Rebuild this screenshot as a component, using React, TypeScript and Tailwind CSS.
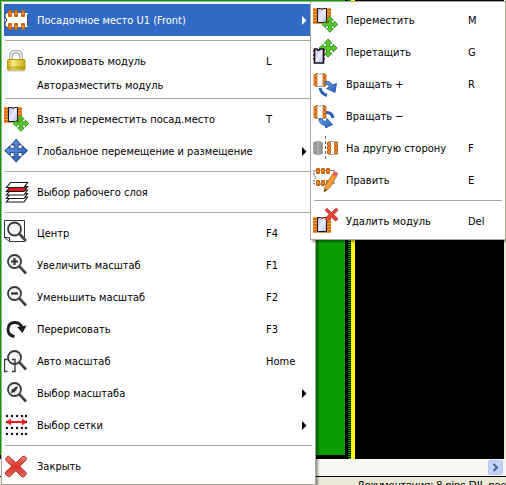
import React from "react";

type IconProps = { children: React.ReactNode };

function Icon({ children }: IconProps) {
  return (
    <svg width="26" height="26" viewBox="0 0 26 26" fill="none" aria-hidden="true" className="shrink-0">
      {children}
    </svg>
  );
}

function Defs() {
  return (
    <svg width="0" height="0" className="block h-0 w-0" aria-hidden="true">
      <defs>
        <linearGradient id="chip" x1="0" y1="0" x2="1" y2="1">
          <stop offset="0" stopColor="#b3b0f0" />
          <stop offset="0.5" stopColor="#ebebfd" />
          <stop offset="1" stopColor="#b9b6f0" />
        </linearGradient>
        <linearGradient id="gold" x1="0" y1="0" x2="1" y2="0">
          <stop offset="0" stopColor="#c9a800" />
          <stop offset="0.3" stopColor="#f6ec8a" />
          <stop offset="1" stopColor="#c6a60a" />
        </linearGradient>
        <linearGradient id="red" x1="0" y1="0" x2="0" y2="1">
          <stop offset="0" stopColor="#f08078" />
          <stop offset="0.5" stopColor="#d8362c" />
          <stop offset="1" stopColor="#e4685c" />
        </linearGradient>
        <linearGradient id="blue" x1="0" y1="0" x2="1" y2="1">
          <stop offset="0" stopColor="#6fa4ea" />
          <stop offset="1" stopColor="#2458b8" />
        </linearGradient>
      </defs>
    </svg>
  );
}

const ARROWS =
  "M12 0L17 5.5H14V10H18.5V7L24 12L18.5 17V14H14V18.5H17L12 24L7 18.5H10V14H5.5V17L0 12L5.5 7V10H10V5.5H7Z";

const CROSS =
  "M4 1L11 7.5L18 1Q20 0 21 1.5L22 3Q22 4 21 5L15 11L21.5 17.5Q22 19 21 20L19 22Q17.500 22 16.500 21L11 15.500L5 21.500Q3.500 22 2.500 21L0.500 19Q0 17.500 1 16.500L7 11L1 5Q0 4 1 3L2.500 1Q3 0 4 1Z";

function Chip() {
  return (
    <>
      <rect x="0" y="1" width="18" height="16" fill="#ee9a4c" />
      {[2, 5, 8, 11, 14].map((y) => (
        <path key={y} d={`M0 ${y}H5V${y + 2}H0ZM13 ${y}H18V${y + 2}H13Z`} fill="#d9710f" />
      ))}
      <path d="M4.500 1.500H7.500Q9 3.500 10.500 1.500H13.500V15.500H4.500Z" fill="url(#chip)" stroke="#17151c" />
    </>
  );
}

function Pad({ x, y, w = 4, h = 7 }: { x: number; y: number; w?: number; h?: number }) {
  return (
    <g>
      <rect x={x} y={y} width={w} height={h} rx="1" fill="#c8640c" />
      <rect x={x + w / 2 - 1} y={y + h / 2 - 1} width="2" height="2" fill="#ee9238" />
    </g>
  );
}

function FootprintIcon() {
  return (
    <Icon>
      <rect x="1" y="6" width="23" height="14" fill="#fff" />
      <path d="M1 10V6H3M1 16V20H3M1 10L3 13L1 16" stroke="#222" />
      <path d="M23.500 7V19.500" stroke="#555" />
      {[4, 10, 17].map((x) => (
        <g key={x}>
          <Pad x={x} y={3} />
          <Pad x={x} y={16} />
        </g>
      ))}
    </Icon>
  );
}

function LockIcon() {
  return (
    <Icon>
      <path d="M7 13V8Q7 3.500 12 3.500T17 8V13" stroke="#8e8e8e" strokeWidth="3.400" />
      <path d="M7 13V8Q7 3.500 12 3.500T17 8V13" stroke="#ececec" strokeWidth="1.800" />
      <rect x="3.500" y="11.500" width="17.500" height="10.500" rx="1" fill="url(#gold)" stroke="#b39a12" />
      <path d="M4 19.500H21" stroke="#b38f00" strokeWidth="2" opacity="0.6" />
      <path d="M4 23H21" stroke="#aaa" opacity="0.6" />
    </Icon>
  );
}

function GrabIcon() {
  return (
    <Icon>
      <Chip />
      <g transform="translate(9 9.500) scale(0.660)">
        <path d={ARROWS} fill="#5ecb2d" stroke="#2f941b" strokeWidth="1.500" />
      </g>
    </Icon>
  );
}

function MoveAllIcon() {
  return (
    <Icon>
      <g transform="translate(1 1.500) scale(0.930)">
        <path d={ARROWS} fill="url(#blue)" stroke="#244885" strokeWidth="1.100" />
      </g>
    </Icon>
  );
}

function LayersIcon() {
  return (
    <Icon>
      {[18, 14.5, 11, 7.5, 3.5].map((y) => (
        <path
          key={y}
          d={`M6.500 ${y}H23.500L20 ${y + 5}H2.500Z`}
          fill={y === 7.5 ? "#e01820" : "#fff"}
          stroke="#191919"
          strokeWidth="1.200"
        />
      ))}
    </Icon>
  );
}

function Lens({ y = 9.5 }: { y?: number }) {
  return (
    <>
      <path d={`M15.500 ${y + 5}L22 ${y + 12}`} stroke="#444" strokeWidth="2.600" />
      <circle cx="10.500" cy={y} r="6.500" fill="#f4f4f4" stroke="#383838" strokeWidth="1.800" />
    </>
  );
}

function CenterIcon() {
  return (
    <Icon>
      <path d="M0.500 0.500H20.500V21.500H5.500L0.500 17.500Z" fill="#fff" stroke="#333" />
      <path d="M0.500 17.500H5.500V21.500" stroke="#333" />
      <Lens y={9} />
    </Icon>
  );
}

function ZoomInIcon() {
  return (
    <Icon>
      <Lens />
      <path d="M7 9.500H14M10.500 6V13" stroke="#333" strokeWidth="2.200" />
    </Icon>
  );
}

function ZoomOutIcon() {
  return (
    <Icon>
      <Lens />
      <path d="M7 9.500H14" stroke="#333" strokeWidth="2.200" />
    </Icon>
  );
}

function RedrawIcon() {
  return (
    <Icon>
      <path d="M10.500 20.500Q3.500 19.500 4 13Q4.500 6.500 11 6.500Q16.500 6.500 18 12" stroke="#1d1d1d" strokeWidth="2.800" />
      <path d="M13 11L22.500 9.500L18.500 17Z" fill="#1d1d1d" />
    </Icon>
  );
}

function AutoZoomIcon() {
  return (
    <Icon>
      <Lens />
      <path d="M3.500 11.500H0.500V23.500H3.500M8 11.500H11V23.500H8" stroke="#333" strokeWidth="1.300" />
    </Icon>
  );
}

function ZoomSelectIcon() {
  return (
    <Icon>
      <Lens />
      <path d="M7 13L8 8.500L9 9.500L10.500 7.500L14 6L12.500 10L10.500 11.500L11.500 12Z" fill="#333" />
    </Icon>
  );
}

function GridIcon() {
  return (
    <Icon>
      {[4, 10, 16, 22].map((y) =>
        [3, 8, 13, 18, 22].map((x) => <circle key={`${x}-${y}`} cx={x} cy={y} r="1.200" fill="#111" />),
      )}
      <path d="M2 10L7 6.500V9H18V6.500L23 10L18 13.500V11H7V13.500Z" fill="#f11c16" />
    </Icon>
  );
}

function CloseIcon() {
  return (
    <Icon>
      <g transform="translate(1 2.500) scale(0.980)">
        <path d={CROSS} fill="url(#red)" stroke="#a8231d" />
      </g>
    </Icon>
  );
}

function DragIcon() {
  return (
    <Icon>
      <g transform="translate(6 0) scale(0.760)">
        <path d={ARROWS} fill="#5ecb2d" stroke="#2f941b" strokeWidth="1.300" />
      </g>
      <path d="M0 12H12M0 16H12M0 20H12" stroke="#d62f35" strokeWidth="2" />
      <path d="M1.500 10H4Q5.500 12.500 7 10H10.500V24H1.500Z" fill="url(#chip)" stroke="#17151c" strokeWidth="1.600" />
    </Icon>
  );
}

function PadColumns() {
  return (
    <>
      <path d="M2.500 2.500H5.500Q7 4.500 8.500 2.500H12V15.500H2.500Z" fill="#fff" stroke="#999" />
      {[3, 7, 11].map((y) => (
        <g key={y}>
          <Pad x={0.5} y={y} h={4} />
          <Pad x={9.5} y={y} h={4} />
        </g>
      ))}
    </>
  );
}

function RotatePlusIcon() {
  return (
    <Icon>
      <PadColumns />
      <path d="M12 10.500Q17 9.500 19.500 14L23.500 12.500L22 21.500L13.500 17.500L16.500 16Q15 12.500 12 13Z" fill="url(#blue)" stroke="#1f4e9e" strokeWidth="0.800" />
      <path d="M7 17Q8 22.500 14 24.500" stroke="#2c61ba" strokeWidth="3" />
    </Icon>
  );
}

function RotateMinusIcon() {
  return (
    <Icon>
      <PadColumns />
      <path d="M13 9.500Q19 9 20 15" stroke="#2c61ba" strokeWidth="3" />
      <path d="M6 16H9Q10 18.500 13 18.500L14 15.500L19.500 21.500L12.500 25V22.500Q6 21.500 6 16Z" fill="url(#blue)" stroke="#1f4e9e" strokeWidth="0.800" />
    </Icon>
  );
}

function FlipIcon() {
  return (
    <Icon>
      <rect x="2" y="6" width="6" height="14" fill="#aaa" />
      {[7, 11, 15].map((y) => (
        <g key={y}>
          <rect x="0" y={y} width="4" height="4" rx="1" fill="#999" />
          <rect x="6" y={y} width="4" height="4" rx="1" fill="#999" />
        </g>
      ))}
      <path d="M12.500 1V25" stroke="#686868" strokeDasharray="3 2" />
      <path d="M15.500 6.500H24V19.500H15.500Z" stroke="#aaa" />
      {[7, 11, 15].map((y) => (
        <g key={y}>
          <Pad x={14} y={y} h={4} />
          <Pad x={21} y={y} h={4} />
        </g>
      ))}
    </Icon>
  );
}

function EditIcon() {
  return (
    <Icon>
      <path d="M1 8V3.500H21V17H1V13L3 10.500Z" stroke="#555" strokeDasharray="2 1" />
      {[3, 8, 13].map((x) => (
        <g key={x}>
          <Pad x={x} y={1} h={6} />
          <Pad x={x} y={13} h={6} />
        </g>
      ))}
      <path d="M11 25L12.500 18.500L19.500 7L23.500 9.500L16.500 21Z" fill="#f6a03c" stroke="#b96816" strokeWidth="0.800" />
      <path d="M11 25L11.800 21.500L14 23Z" fill="#333" />
      <path d="M19.500 7L21 4.500Q25 4.500 25 7L23.500 9.500Z" fill="#e45a5a" />
    </Icon>
  );
}

function DeleteIcon() {
  return (
    <Icon>
      <g transform="translate(0 8)">
        <Chip />
      </g>
      <g transform="translate(12 0) scale(0.590)">
        <path d={CROSS} fill="#df4238" stroke="#b32921" />
      </g>
    </Icon>
  );
}

type Entry =
  | "separator"
  | {
      label: string;
      icon?: React.ReactNode;
      shortcut?: string;
      submenu?: boolean;
      active?: boolean;
    };

const mainEntries: Entry[] = [
  { label: "Посадочное место U1 (Front)", icon: <FootprintIcon />, submenu: true, active: true },
  "separator",
  { label: "Блокировать модуль", icon: <LockIcon />, shortcut: "L" },
  { label: "Авторазместить модуль" },
  "separator",
  { label: "Взять и переместить посад.место", icon: <GrabIcon />, shortcut: "T" },
  { label: "Глобальное перемещение и размещение", icon: <MoveAllIcon />, submenu: true },
  "separator",
  { label: "Выбор рабочего слоя", icon: <LayersIcon /> },
  "separator",
  { label: "Центр", icon: <CenterIcon />, shortcut: "F4" },
  { label: "Увеличить масштаб", icon: <ZoomInIcon />, shortcut: "F1" },
  { label: "Уменьшить масштаб", icon: <ZoomOutIcon />, shortcut: "F2" },
  { label: "Перерисовать", icon: <RedrawIcon />, shortcut: "F3" },
  { label: "Авто масштаб", icon: <AutoZoomIcon />, shortcut: "Home" },
  { label: "Выбор масштаба", icon: <ZoomSelectIcon />, submenu: true },
  { label: "Выбор сетки", icon: <GridIcon />, submenu: true },
  "separator",
  { label: "Закрыть", icon: <CloseIcon /> },
];

const footprintEntries: Entry[] = [
  { label: "Переместить", icon: <GrabIcon />, shortcut: "M" },
  { label: "Перетащить", icon: <DragIcon />, shortcut: "G" },
  { label: "Вращать +", icon: <RotatePlusIcon />, shortcut: "R" },
  { label: "Вращать −", icon: <RotateMinusIcon /> },
  { label: "На другую сторону", icon: <FlipIcon />, shortcut: "F" },
  { label: "Править", icon: <EditIcon />, shortcut: "E" },
  "separator",
  { label: "Удалить модуль", icon: <DeleteIcon />, shortcut: "Del" },
];

function Menu({ entries, label, className, keyClass }: { entries: Entry[]; label: string; className: string; keyClass: string }) {
  return (
    <div
      role="menu"
      aria-label={label}
      className={`absolute border border-[#aca899] bg-white p-[2px] shadow-[2px_2px_2px_rgba(0,0,0,0.4)] ${className}`}
    >
      {entries.map((entry, i) =>
        entry === "separator" ? (
          <div key={i} role="separator" className="flex h-[9px] items-center px-px">
            <div className="h-px w-full bg-[#aca899]" />
          </div>
        ) : (
          <button
            key={i}
            type="button"
            role="menuitem"
            aria-haspopup={entry.submenu ? "menu" : undefined}
            className={`flex w-full items-center text-left whitespace-nowrap ${entry.icon ? "h-8" : "h-[17px]"} ${
              entry.active ? "bg-[#316ac5] text-white" : "text-black"
            }`}
          >
            <span className="w-[33px] shrink-0">{entry.icon}</span>
            <span className={`min-w-0 flex-1 ${entry.icon ? "pt-[2px]" : ""}`}>{entry.label}</span>
            <span className={`flex shrink-0 items-center ${keyClass}`}>
              {entry.shortcut && <span className="pt-[2px]">{entry.shortcut}</span>}
              {entry.submenu && (
                <svg width="5" height="9" viewBox="0 0 5 9" className="mr-[6px] ml-auto" aria-hidden="true">
                  <path d="M0 0L4.500 4.500L0 9Z" fill="currentColor" />
                </svg>
              )}
            </span>
          </button>
        ),
      )}
    </div>
  );
}

export default function App() {
  return (
    <div className="relative flex h-screen flex-col overflow-hidden bg-[#ece9d8] font-['DejaVu_Sans_Condensed','DejaVu_Sans',sans-serif] text-[11px] leading-4">
      <Defs />
      <div className="mr-[2px] flex min-h-0 flex-1 bg-black">
        <div className="mb-1 w-[345px] bg-[#089c00]" />
        <div className="ml-[3px] w-[3px] bg-[repeating-linear-gradient(to_bottom,#089c00_0px,#089c00_1px,#000_1px,#000_2px)]" />
        <div className="w-1 bg-[#ffff00]" />
      </div>
      <div className="flex h-[17px] shrink-0 items-center justify-end bg-[#f8f7f2] pr-[3px]">
        <button
          type="button"
          aria-label="Прокрутить вправо"
          className="flex h-[15px] w-[15px] items-center justify-center rounded-[2px] border border-[#b4c8f6] bg-[#c3d3fd]"
        >
          <svg width="7" height="9" viewBox="0 0 7 9" fill="none" aria-hidden="true">
            <path d="M1.500 1L5 4.500L1.500 8" stroke="#4d6185" strokeWidth="2" />
          </svg>
        </button>
      </div>
      <div className="h-[9px] shrink-0 overflow-hidden border-t border-black pt-[2px] pl-[357px] font-['Liberation_Sans',sans-serif] text-[11px] leading-3 whitespace-nowrap text-black">
        Документация: 8 pins DIL pack
      </div>
      <Menu entries={mainEntries} label="Контекстное меню" className="top-px left-px w-[315px]" keyClass="w-[47px]" />
      <Menu entries={footprintEntries} label="Посадочное место" className="top-px right-0 left-[310px]" keyClass="w-[35px]" />
    </div>
  );
}
